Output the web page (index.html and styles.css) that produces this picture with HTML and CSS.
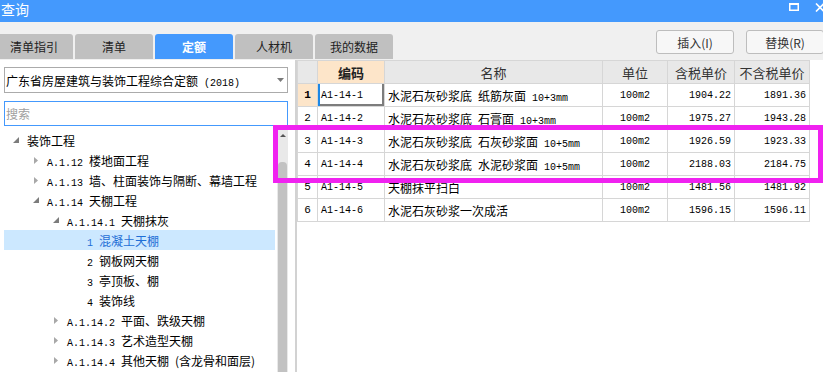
FILE: index.html
```html
<!DOCTYPE html>
<html lang="zh-CN">
<head>
  <meta charset="UTF-8">
  <title>查询</title>
  <link rel="stylesheet" href="styles.css">
</head>
<body>

  <div class="titlebar">
    <span class="title">查询</span>
    <div class="win-btns">
      <svg width="10" height="8" viewBox="0 0 10 8"><rect x="0.75" y="1" width="8.5" height="6.25" fill="none" stroke="#fff" stroke-width="1.5"/><rect x="0" y="0" width="10" height="2" fill="#fff"/></svg>
      <svg width="10" height="9" viewBox="0 0 10 9"><path d="M1 0.5 L9 8.5 M9 0.5 L1 8.5" stroke="#fff" stroke-width="1.6"/></svg>
    </div>
  </div>

  <div class="toolbar">
    <div class="tabs">
      <div class="tab">清单指引</div>
      <div class="tab">清单</div>
      <div class="tab on">定额</div>
      <div class="tab">人材机</div>
      <div class="tab">我的数据</div>
    </div>
    <div class="actions">
      <button>插入(I)</button>
      <button>替换(R)</button>
    </div>
  </div>

  <div class="main">
    <div class="side">
      <div class="select">
        <span>广东省房屋建筑与装饰工程综合定额<span class="m"> (2018)</span></span>
        <svg class="caret" width="7" height="4" viewBox="0 0 7 4"><polygon points="0,0 7,0 3.5,4" fill="#7a7a7a"/></svg>
      </div>
      <div class="search">搜索</div>

      <div class="tree-wrap">
        <ul class="tree">
          <li class="l0"><span class="tg"><svg width="6" height="6"><polygon points="6,0 6,6 0,6" fill="#7c7c7c"/></svg></span><span>装饰工程</span></li>
          <li class="l1"><span class="tg"><svg width="4" height="7"><polygon points="0,0 4,3.5 0,7" fill="#a8a8a8"/></svg></span><span><span class="m">A.1.12 </span>楼地面工程</span></li>
          <li class="l1"><span class="tg"><svg width="4" height="7"><polygon points="0,0 4,3.5 0,7" fill="#a8a8a8"/></svg></span><span><span class="m">A.1.13 </span>墙、柱面装饰与隔断、幕墙工程</span></li>
          <li class="l1"><span class="tg"><svg width="6" height="6"><polygon points="6,0 6,6 0,6" fill="#7c7c7c"/></svg></span><span><span class="m">A.1.14 </span>天棚工程</span></li>
          <li class="l2"><span class="tg"><svg width="6" height="6"><polygon points="6,0 6,6 0,6" fill="#7c7c7c"/></svg></span><span><span class="m">A.1.14.1 </span>天棚抹灰</span></li>
          <li class="l3 sel"><span class="tg"></span><span><span class="m">1 </span>混凝土天棚</span></li>
          <li class="l3"><span class="tg"></span><span><span class="m">2 </span>钢板网天棚</span></li>
          <li class="l3"><span class="tg"></span><span><span class="m">3 </span>亭顶板、棚</span></li>
          <li class="l3"><span class="tg"></span><span><span class="m">4 </span>装饰线</span></li>
          <li class="l2"><span class="tg"><svg width="4" height="7"><polygon points="0,0 4,3.5 0,7" fill="#a8a8a8"/></svg></span><span><span class="m">A.1.14.2 </span>平面、跌级天棚</span></li>
          <li class="l2"><span class="tg"><svg width="4" height="7"><polygon points="0,0 4,3.5 0,7" fill="#a8a8a8"/></svg></span><span><span class="m">A.1.14.3 </span>艺术造型天棚</span></li>
          <li class="l2"><span class="tg"><svg width="4" height="7"><polygon points="0,0 4,3.5 0,7" fill="#a8a8a8"/></svg></span><span><span class="m">A.1.14.4 </span>其他天棚<span class="m"> </span>(含龙骨和面层)</span></li>
        </ul>
        <div class="vscroll">
          <svg class="up" width="6" height="3" viewBox="0 0 6 3"><polygon points="0,3 6,3 3,0" fill="#555"/></svg>
          <div class="thumb"></div>
        </div>
      </div>
    </div>

    <div class="grid">
      <table>
        <colgroup>
          <col style="width:20px"><col style="width:67px"><col style="width:218px">
          <col style="width:65px"><col style="width:67px"><col style="width:75px">
        </colgroup>
        <thead>
          <tr>
            <th></th>
            <th class="cur">编码</th>
            <th>名称</th>
            <th>单位</th>
            <th>含税单价</th>
            <th>不含税单价</th>
          </tr>
        </thead>
        <tbody>
          <tr>
            <td class="n cur">1</td>
            <td class="code focus">A1-14-1</td>
            <td>水泥石灰砂浆底<span class="m"> </span>纸筋灰面<span class="m"> 10+3mm</span></td>
            <td class="u">100m2</td>
            <td class="p">1904.22</td>
            <td class="p">1891.36</td>
          </tr>
          <tr>
            <td class="n">2</td>
            <td class="code">A1-14-2</td>
            <td>水泥石灰砂浆底<span class="m"> </span>石膏面<span class="m"> 10+3mm</span></td>
            <td class="u">100m2</td>
            <td class="p">1975.27</td>
            <td class="p">1943.28</td>
          </tr>
          <tr>
            <td class="n">3</td>
            <td class="code">A1-14-3</td>
            <td>水泥石灰砂浆底<span class="m"> </span>石灰砂浆面<span class="m"> 10+5mm</span></td>
            <td class="u">100m2</td>
            <td class="p">1926.59</td>
            <td class="p">1923.33</td>
          </tr>
          <tr>
            <td class="n">4</td>
            <td class="code">A1-14-4</td>
            <td>水泥石灰砂浆底<span class="m"> </span>水泥砂浆面<span class="m"> 10+5mm</span></td>
            <td class="u">100m2</td>
            <td class="p">2188.03</td>
            <td class="p">2184.75</td>
          </tr>
          <tr>
            <td class="n">5</td>
            <td class="code">A1-14-5</td>
            <td>天棚抹平扫白</td>
            <td class="u">100m2</td>
            <td class="p">1481.56</td>
            <td class="p">1481.92</td>
          </tr>
          <tr>
            <td class="n">6</td>
            <td class="code">A1-14-6</td>
            <td>水泥石灰砂浆一次成活</td>
            <td class="u">100m2</td>
            <td class="p">1596.15</td>
            <td class="p">1596.11</td>
          </tr>
        </tbody>
      </table>
    </div>
  </div>

  <!-- highlight box drawn over the grid -->
  <div class="mark"></div>

</body>
</html>
```

FILE: styles.css
```css
html, body {
  margin: 0;
  width: 823px;
  height: 372px;
  overflow: hidden;
}

body {
  position: relative;
  font-family: "Noto Sans CJK SC", "Microsoft YaHei", sans-serif;
  font-size: 12px;
  color: #000;
  background: #fff;
}

.m {
  font-family: "Liberation Mono", monospace;
  font-size: 10px;
}

/* title bar */
.titlebar {
  height: 22px;
  background: #4499fd;
  display: flex;
  align-items: flex-start;
}

.title {
  color: #fff;
  font-size: 14px;
  line-height: 18px;
  margin-left: 1px;
}

.win-btns {
  margin-left: auto;
  margin-top: 3px;
  margin-right: -2px;
  display: flex;
  gap: 16px;
}

.win-btns svg {
  display: block;
}

/* tabs + buttons */
.toolbar {
  height: 38px;
  background: #f0f0f0;
  display: flex;
  align-items: flex-start;
}

.tabs {
  display: flex;
  gap: 2px;
  margin-top: 12px;
  margin-left: -5px;
}

.tab {
  width: 78px;
  height: 25px;
  line-height: 25px;
  text-align: center;
  background: #c0c0c0;
  color: #222;
  border-radius: 3px 3px 0 0;
  font-size: 12px;
}

.tab.on {
  background: #4499fd;
  color: #fff;
  font-weight: bold;
}

.actions {
  margin-left: auto;
  margin-top: 8px;
  margin-right: -1px;
  display: flex;
  gap: 12px;
}

.actions button {
  width: 78px;
  height: 24px;
  padding: 0;
  border: 1px solid #bdbdbd;
  border-radius: 3px;
  background: #f7f7f7;
  color: #333;
  font-family: "Noto Sans CJK SC", sans-serif;
  font-size: 12px;
}

/* main area */
.main {
  display: flex;
  height: 312px;
}

.side {
  width: 295px;
  box-sizing: border-box;
  padding: 7px 7px 0 4px;
  display: flex;
  flex-direction: column;
}

.select {
  height: 26px;
  box-sizing: border-box;
  border: 1px solid #ababab;
  display: flex;
  align-items: center;
  padding: 0 3px 0 1px;
}

.select .caret {
  margin-left: auto;
}

.search {
  height: 25px;
  box-sizing: border-box;
  margin-top: 8px;
  border: 1px solid #4499fd;
  color: #a0a0a0;
  line-height: 23px;
  padding-left: 1px;
}

.tree-wrap {
  margin-top: 4px;
  flex: 1;
  min-height: 0;
  display: flex;
  gap: 2px;
  overflow: hidden;
}

.tree {
  flex: 1;
  list-style: none;
  margin: 0;
  padding: 0;
}

.tree li {
  height: 20px;
  display: flex;
  align-items: center;
  white-space: nowrap;
}

.tree .l1 { padding-left: 20px; }
.tree .l2 { padding-left: 40px; }
.tree .l3 { padding-left: 60px; }

.tree .tg {
  width: 23px;
  flex: none;
  display: flex;
  justify-content: center;
}

.tree .tg svg {
  display: block;
}

.tree li.sel {
  background: #cce8ff;
  color: #1f6fd6;
}

.vscroll {
  width: 11px;
  background: #e9e9e9;
  display: flex;
  flex-direction: column;
  align-items: center;
}

.vscroll .up {
  margin-top: 4px;
}

.vscroll .thumb {
  margin-top: 25px;
  width: 9px;
  flex: 1;
  background: #c2c2c2;
  border-radius: 4px 4px 0 0;
}

/* data grid */
.grid {
  flex: 1;
  border-left: 2px solid #d2d2d2;
  background: #fff;
}

.grid table {
  border-collapse: collapse;
  table-layout: fixed;
  width: 512px;
}

.grid th, .grid td {
  border: 1px solid #d6d6d6;
  height: 22px;
  padding: 0 3px;
  white-space: nowrap;
  overflow: hidden;
  text-align: left;
}

.grid th {
  background: #e8e8e8;
  color: #333;
  font-size: 13px;
  font-weight: normal;
  text-align: center;
}

.grid th.cur {
  background: #fde5c9;
  color: #222;
  font-weight: bold;
}

.grid td.n {
  padding: 0;
  text-align: center;
  font-family: "Liberation Mono", monospace;
  font-size: 11px;
}

.grid td.n.cur {
  background: #fde5c9;
  font-weight: bold;
}

.grid td.code, .grid td.u, .grid td.p {
  font-family: "Liberation Mono", monospace;
  font-size: 10px;
}

.grid td.u {
  text-align: center;
}

.grid td.p {
  text-align: right;
}

.grid td.focus {
  box-shadow: inset 2px 0 #1e88e5, inset -2px -2px #7d7d7d;
}

/* magenta annotation box */
.mark {
  position: absolute;
  left: 273px;
  top: 125px;
  width: 550px;
  height: 58px;
  box-sizing: border-box;
  border: 5px solid #f022f0;
}
```
